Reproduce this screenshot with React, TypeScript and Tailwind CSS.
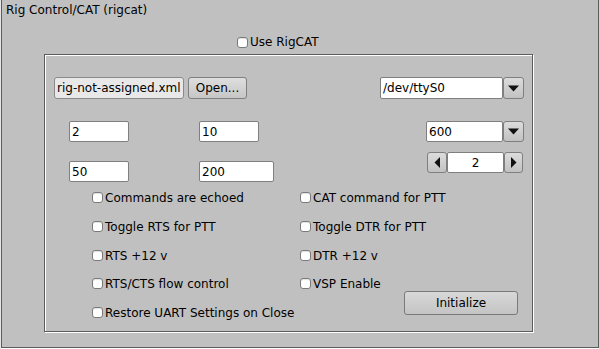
import React from "react";

function Check({ label }: { label: string }) {
  return (
    <div className="flex h-[11px] items-center">
      <div className="h-[11px] w-[11px] shrink-0 rounded-[3px] border border-[#7a7a7a] bg-white shadow-[inset_0_1px_1px_rgba(0,0,0,0.12)]" />
      <span className="ml-[2px] whitespace-nowrap leading-[14px] text-black">{label}</span>
    </div>
  );
}

function DownArrow() {
  return (
    <svg width="11" height="7" viewBox="0 0 11 7">
      <polygon points="0,0.5 11,0.5 5.5,6.5" fill="#111" />
    </svg>
  );
}

function Combo({ value, wClass }: { value: string; wClass: string }) {
  return (
    <div className={`flex h-[21px] ${wClass}`}>
      <div className="flex min-w-0 flex-1 items-center rounded-[2px] border border-[#7f7f7f] bg-white pl-[2px] leading-[14px]">
        {value}
      </div>
      <div className="flex w-[21px] items-center justify-center rounded-[3px] border border-[#7f7f7f] bg-gradient-to-b from-[#dcdcdc] to-[#c2c2c2]">
        <DownArrow />
      </div>
    </div>
  );
}

function Field({ value, wClass }: { value: string; wClass: string }) {
  return (
    <div className={`flex h-[21px] items-center rounded-[2px] border border-[#7f7f7f] bg-white pl-[2px] leading-[14px] ${wClass}`}>
      {value}
    </div>
  );
}

export default function App() {
  return (
    <div className="h-[349px] w-[599px] overflow-hidden bg-[#c0c0c0] font-['DejaVu_Sans',sans-serif] text-[12px] text-black shadow-[inset_1px_0_0_#e6e6e6]">
      <div className="ml-[1px] flex h-[348px] w-[598px] flex-col border-b border-l border-r border-[#5c5c5c] shadow-[0_1px_0_#ffffff]">
        <div className="ml-[4px] mt-[3px] h-[14px] leading-[14px]">Rig Control/CAT (rigcat)</div>

        <div className="ml-[235px] mt-[18px] flex h-[14px] items-center">
          <div className="h-[11px] w-[11px] rounded-[3px] border border-[#7a7a7a] bg-white shadow-[inset_0_1px_1px_rgba(0,0,0,0.12)]" />
          <span className="ml-[2px] leading-[14px]">Use RigCAT</span>
        </div>

        <div className="ml-[42px] mt-[5px] flex h-[278px] w-[489px] flex-col border border-[#5c5c5c] shadow-[inset_1px_1px_0_#ffffff,1px_1px_0_#ffffff]">
          {/* row 1 */}
          <div className="mt-[22px] flex h-[22px] items-stretch">
            <div className="ml-[9px] flex w-[130px] items-center rounded-[3px] border border-[#8a8a8a] bg-[#e8e8e8] pl-[2px] leading-[14px]">
              rig-not-assigned.xml
            </div>
            <div className="ml-[4px] flex w-[59px] items-center justify-center rounded-[3px] border border-[#7f7f7f] bg-gradient-to-b from-[#dedede] to-[#c6c6c6] leading-[14px]">
              Open...
            </div>
            <div className="ml-auto mr-[8px]">
              <div className="flex h-[22px] w-[144px]">
                <div className="flex min-w-0 flex-1 items-center rounded-[2px] border border-[#7f7f7f] bg-white pl-[2px] leading-[14px]">
                  /dev/ttyS0
                </div>
                <div className="flex w-[21px] items-center justify-center rounded-[3px] border border-[#7f7f7f] bg-gradient-to-b from-[#dcdcdc] to-[#c2c2c2]">
                  <DownArrow />
                </div>
              </div>
            </div>
          </div>

          {/* row 2 */}
          <div className="mt-[22px] flex h-[21px] items-start">
            <Field value="2" wClass="ml-[24px] w-[60px]" />
            <Field value="10" wClass="ml-[70px] w-[60px]" />
            <div className="ml-auto mr-[8px]">
              <Combo value="600" wClass="w-[98px]" />
            </div>
          </div>

          {/* row 3 */}
          <div className="mt-[10px] flex h-[30px] items-start">
            <Field value="50" wClass="ml-[24px] mt-[9px] w-[60px]" />
            <Field value="200" wClass="ml-[70px] mt-[9px] w-[75px]" />
            <div className="ml-auto mr-[9px] flex h-[21px] w-[96px]">
              <div className="flex w-[20px] items-center justify-center rounded-[3px] border border-[#7f7f7f] bg-gradient-to-b from-[#dcdcdc] to-[#c2c2c2]">
                <svg width="7" height="11" viewBox="0 0 7 11">
                  <polygon points="6,0 6,11 0.5,5.5" fill="#111" />
                </svg>
              </div>
              <div className="flex flex-1 items-center justify-center rounded-[2px] border border-[#7f7f7f] bg-white leading-[14px]">
                2
              </div>
              <div className="flex w-[19px] items-center justify-center rounded-[3px] border border-[#7f7f7f] bg-gradient-to-b from-[#dcdcdc] to-[#c2c2c2]">
                <svg width="7" height="11" viewBox="0 0 7 11">
                  <polygon points="1,0 1,11 6.5,5.5" fill="#111" />
                </svg>
              </div>
            </div>
          </div>

          {/* checkboxes */}
          <div className="mt-[10px] flex">
            <div className="ml-[47px] flex w-[208px] flex-col">
              <Check label="Commands are echoed" />
              <div className="mt-[18px]"><Check label="Toggle RTS for PTT" /></div>
              <div className="mt-[18px]"><Check label="RTS +12 v" /></div>
              <div className="mt-[17px]"><Check label="RTS/CTS flow control" /></div>
              <div className="mt-[18px]"><Check label="Restore UART Settings on Close" /></div>
            </div>
            <div className="flex flex-col">
              <Check label="CAT command for PTT" />
              <div className="mt-[18px]"><Check label="Toggle DTR for PTT" /></div>
              <div className="mt-[18px]"><Check label="DTR +12 v" /></div>
              <div className="mt-[17px]"><Check label="VSP Enable" /></div>
              <div className="ml-[104px] mt-[2px] flex h-[24px] w-[114px] items-center justify-center rounded-[3px] border border-[#7a7a7a] bg-gradient-to-b from-[#d8d8d8] to-[#c4c4c4] leading-[14px]">
                Initialize
              </div>
            </div>
          </div>
        </div>
      </div>
    </div>
  );
}
